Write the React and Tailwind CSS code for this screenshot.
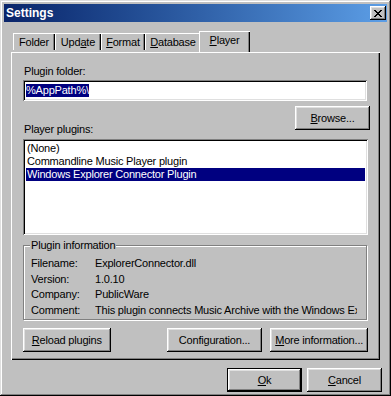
import React from 'react';

const raised =
  'shadow-[inset_-1px_-1px_#000,inset_1px_1px_#fff,inset_-2px_-2px_#808080,inset_2px_2px_#dfdfdf]';
const sunken =
  'shadow-[inset_1px_1px_#808080,inset_-1px_-1px_#fff,inset_2px_2px_#000,inset_-2px_-2px_#dfdfdf]';

function U({ children }) {
  return <span className="underline underline-offset-[1px]">{children}</span>;
}

function Button({ children, className = '', isDefault = false }) {
  return (
    <div className={`${isDefault ? 'border border-black' : ''} ${className}`}>
      <button className={`flex h-full w-full items-center justify-center bg-[#c0c0c0] ${raised}`}>
        {children}
      </button>
    </div>
  );
}

function Tab({ children, width, selected = false }) {
  if (selected) {
    return (
      <div
        className={`relative z-10 -mx-[2px] flex h-[21px] items-start justify-center bg-[#c0c0c0] pt-[3px] shadow-[inset_1px_1px_#fff,inset_-1px_0_#000,inset_-2px_0_#808080] ${width}`}
      >
        {children}
      </div>
    );
  }
  return (
    <div
      className={`mt-[2px] flex h-[17px] items-start justify-center pt-[3px] shadow-[inset_1px_1px_#fff,inset_-1px_0_#000,inset_-2px_0_#808080] ${width}`}
    >
      {children}
    </div>
  );
}

const info = [
  ['Filename:', 'ExplorerConnector.dll'],
  ['Version:', '1.0.10'],
  ['Company:', 'PublicWare'],
  ['Comment:', 'This plugin connects Music Archive with the Windows Explorer'],
];

export default function App() {
  return (
    <div
      className={`flex h-[396px] w-[391px] flex-col bg-[#c0c0c0] p-[4px] font-['Liberation_Sans',Arial,sans-serif] text-[11px] leading-[13px] tracking-[-0.2px] text-black shadow-[inset_-1px_-1px_#000,inset_1px_1px_#dfdfdf,inset_-2px_-2px_#808080,inset_2px_2px_#fff]`}
    >
      {/* title bar */}
      <div className="flex h-[18px] items-center justify-between bg-gradient-to-r from-[#0a246a] to-[#5c9ee6] pl-[2px] pr-[1px]">
        <span className="text-[12px] font-bold tracking-normal text-white">Settings</span>
        <div
          className={`flex h-[14px] w-[16px] items-center justify-center bg-[#c0c0c0] ${raised}`}
        >
          <svg width="8" height="7" viewBox="0 0 8 7">
            <path d="M0 0h2v1h1v1h2V1h1V0h2v1H7v1H6v1H5v1h1v1h1v1h1v1H6V6H5V5H3v1H2v1H0V6h1V5h1V4h1V3H2V2H1V1H0z" fill="#000" />
          </svg>
        </div>
      </div>

      {/* tabs */}
      <div className="mt-[9px] flex pl-[9px]">
        <Tab width="w-[42px]">Folder</Tab>
        <Tab width="w-[46px]">
          Upd<U>a</U>te
        </Tab>
        <Tab width="w-[44px]">
          <U>F</U>ormat
        </Tab>
        <Tab width="w-[56px]">
          <U>D</U>atabase
        </Tab>
        <Tab width="w-[51px]" selected>
          <U>P</U>layer
        </Tab>
      </div>

      {/* panel */}
      <div className="mx-[7px] flex h-[308px] flex-col bg-[#c0c0c0] px-[12px] pt-[13px] shadow-[inset_1px_1px_#fff,inset_-1px_-1px_#000,inset_-2px_-2px_#808080]">
        <div className="pl-[1px]">Plugin folder:</div>
        <div className={`mt-[2px] flex h-[21px] w-[344px] items-center bg-white px-[3px] ${sunken}`}>
          <span className="bg-[#000080] text-white">%AppPath%\</span>
        </div>

        <div className="mt-[5px] flex justify-end">
          <Button className="-mr-[2px] h-[24px] w-[75px]">
            <U>B</U>rowse...
          </Button>
        </div>
        <div className="-mt-[7px] pl-[1px]">Player plugins:</div>

        <div className={`mt-[3px] h-[96px] w-[345px] bg-white p-[3px] ${sunken}`}>
          <div className="px-[1px]">(None)</div>
          <div className="px-[1px]">Commandline Music Player plugin</div>
          <div className="bg-[#000080] px-[1px] text-white">Windows Explorer Connector Plugin</div>
        </div>

        {/* group box */}
        <div className="relative mt-[10px] h-[75px] w-[344px] border border-[#808080] pl-[7px] pt-[10px] shadow-[inset_1px_1px_#fff,1px_1px_#fff]">
          <span className="absolute -top-[7px] left-[6px] bg-[#c0c0c0] px-[1px]">Plugin information</span>
          {info.map(([k, v]) => (
            <div key={k} className="flex h-[15.5px] items-center">
              <span className="w-[64px] shrink-0">{k}</span>
              <span className="w-[262px] overflow-hidden whitespace-nowrap">{v}</span>
            </div>
          ))}
        </div>

        <div className="mt-[8px] flex">
          <Button className="h-[24px] w-[88px]">
            <U>R</U>eload plugins
          </Button>
          <Button className="ml-[56px] h-[24px] w-[96px]">Configuration...</Button>
          <Button className="ml-[8px] h-[24px] w-[98px]">
            <U>M</U>ore information...
          </Button>
        </div>
      </div>

      {/* dialog buttons */}
      <div className="mt-[8px] flex justify-end gap-[5px] pr-[5px]">
        <Button isDefault className="h-[24px] w-[75px]">
          <U>O</U>k
        </Button>
        <Button className="h-[24px] w-[75px]">
          <U>C</U>ancel
        </Button>
      </div>
    </div>
  );
}
